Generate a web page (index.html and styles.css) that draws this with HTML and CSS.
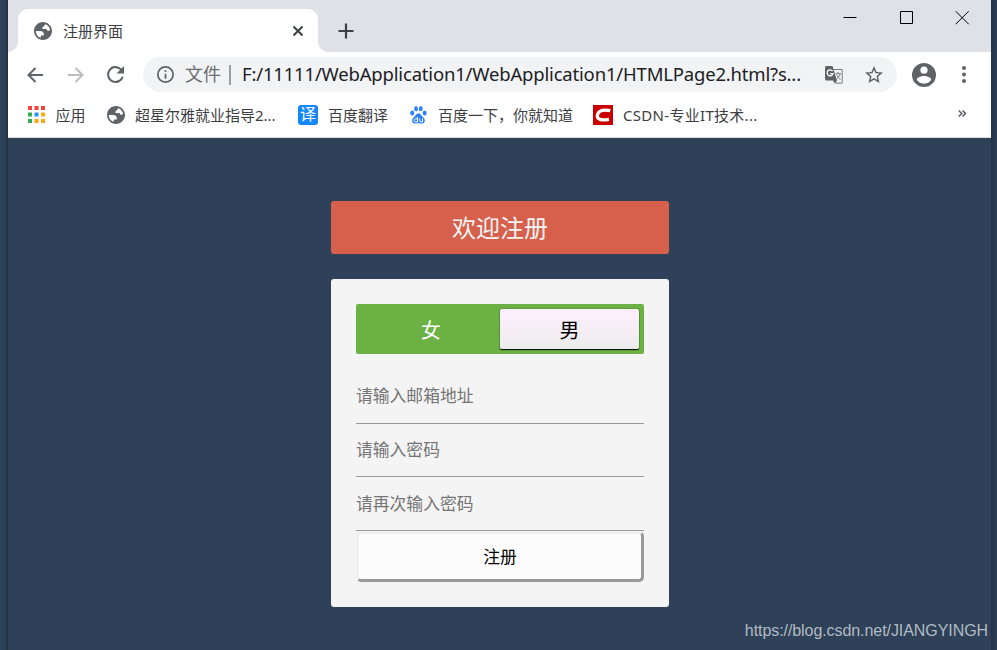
FILE: index.html
```
<!DOCTYPE html>
<html lang="zh-CN">
<head>
<meta charset="utf-8">
<title>注册界面</title>
<link rel="stylesheet" href="styles.css">
</head>
<body>
<svg class="defs" aria-hidden="true">
  <symbol id="globe" viewBox="2 2 20 20">
    <path d="M12 2C6.480 2 2 6.480 2 12s4.480 10 10 10 10-4.480 10-10S17.520 2 12 2zM4 12h4.400c3.410.020 4.920 1.730 4.540 5.130H9.490v2.470A8 8 0 0 1 4 12zm8-8a7.980 7.980 0 0 1 7.890 6.720c-.440.640-1 .960-1.670.960-1.390 0-2.190-.810-2.180-2.030H11.420c-.230-1.960.500-2.910 2.100-2.840 0-1.100.500-1.800 1.200-2.230A8 8 0 0 0 12 4z"/>
  </symbol>
</svg>
<div class="window">
  <header class="strip">
    <div class="tab">
      <svg class="globe"><use href="#globe"/></svg>
      <span class="tab-title">注册界面</span>
      <svg class="close" viewBox="0 0 12 12"><path d="M1.500 1.500l9 9m0-9l-9 9"/></svg>
    </div>
    <svg class="plus" viewBox="0 0 16 16"><path d="M8 .500v15M.500 8h15"/></svg>
    <div class="controls">
      <svg viewBox="0 0 14 14"><path d="M.500 7.500h13"/></svg>
      <svg viewBox="0 0 14 14"><path d="M1.500 1.500h12v12h-12z"/></svg>
      <svg viewBox="0 0 14 14"><path d="M.700 1.200l13 13m0-13l-13 13"/></svg>
    </div>
  </header>
  <nav class="toolbar">
    <svg class="back" viewBox="0 0 16 16"><path d="M16 8H1.500M8.500 1L1.500 8l7 7"/></svg>
    <svg class="forward" viewBox="0 0 16 16"><path d="M0 8h14.500M7.500 1l7 7-7 7"/></svg>
    <svg class="reload" viewBox="4 4 16 16"><path d="M17.650 6.350A8 8 0 1 0 19.730 14h-2.080A6 6 0 1 1 12 6c1.660 0 3.140.690 4.220 1.780L13 11h7V4z"/></svg>
    <div class="omnibox">
      <svg class="info" viewBox="2 2 20 20"><path d="M11 17h2v-6h-2zm1-15a10 10 0 1 0 0 20 10 10 0 0 0 0-20zm0 18a8 8 0 1 1 0-16 8 8 0 0 1 0 16zM11 9h2V7h-2z"/></svg>
      <span class="scheme">文件</span>
      <i class="divider"></i>
      <span class="url">F:/11111/WebApplication1/WebApplication1/HTMLPage2.html?s...</span>
      <svg class="translate" viewBox="0 0 18 18">
        <path class="sheet" d="M8.500 3.500h8.700v13.700h-6.500"/>
        <path class="fill" d="M1.500 0h6l4.500 14.500H1.500A1.500 1.500 0 0 1 0 13V1.500A1.500 1.500 0 0 1 1.500 0zM8 14.500h4L10 17.800z"/>
        <path class="letter" d="M7.600 5.100A3 3 0 1 0 8 7.700H5.200"/>
        <path class="sheet" d="M10.500 7.700H16M13 6v1.500M15 8c-.500 2.500-2 4-3.500 5M12 9c.800 2 2 3.500 3.500 4.500"/>
      </svg>
      <svg class="star" viewBox="2 2 20 19"><path d="M22 9.240l-7.190-.620L12 2 9.190 8.630 2 9.240l5.460 4.730L5.820 21 12 17.270 18.180 21l-1.630-7.030zM12 15.400l-3.760 2.270 1-4.280-3.320-2.880 4.380-.380L12 6.100l1.710 4.040 4.380.380-3.320 2.880 1 4.280z"/></svg>
    </div>
    <svg class="avatar" viewBox="2 2 20 20"><path d="M12 2a10 10 0 1 0 0 20 10 10 0 0 0 0-20zm0 3a3 3 0 1 1 0 6 3 3 0 0 1 0-6zm0 14.200a7.200 7.200 0 0 1-6-3.220c.030-1.990 4-3.080 6-3.080s5.970 1.090 6 3.080a7.200 7.200 0 0 1-6 3.220z"/></svg>
    <svg class="more" viewBox="0 0 4 17"><circle cx="2" cy="2" r="2"/><circle cx="2" cy="8.500" r="2"/><circle cx="2" cy="15" r="2"/></svg>
  </nav>
  <nav class="bookmarks">
    <svg class="apps" viewBox="0 0 17 17">
      <path class="red" d="M0 0h4v4H0zM6.500 0h4v4h-4zM13 0h4v4h-4z"/>
      <path class="green" d="M0 6.500h4v4H0zM0 13h4v4H0z"/>
      <path class="blue" d="M6.500 6.500h4v4h-4z"/>
      <path class="gold" d="M13 6.500h4v4h-4zM6.500 13h4v4h-4zM13 13h4v4h-4z"/>
    </svg>
    <span class="bm-apps">应用</span>
    <svg class="globe"><use href="#globe"/></svg>
    <span class="bm-star">超星尔雅就业指导2...</span>
    <span class="fanyi">译</span>
    <span class="bm-fanyi">百度翻译</span>
    <svg class="paw" viewBox="0 0 17 18">
      <ellipse cx="2.200" cy="7" rx="2" ry="2.500"/><ellipse cx="6" cy="2.700" rx="1.900" ry="2.600"/><ellipse cx="10.800" cy="2.700" rx="1.900" ry="2.600"/><ellipse cx="14.700" cy="7" rx="2" ry="2.500"/>
      <path d="M8.500 7.200c2.200 0 2.700 2.300 4.400 3.800 3.300 2.800 2 6.500-.900 6.500-1.400 0-2-.300-3.500-.300s-2.100.300-3.500.300c-2.900 0-4.200-3.700-.900-6.500C5.800 9.500 6.300 7.200 8.500 7.200z"/>
      <path class="mark" d="M7.500 11v5H5.800c-2.200 0-2.200-3.200 0-3.200h1.700M9.700 12.500v2.300c0 1.500 2.800 1.500 2.800 0v-2.300V16"/>
    </svg>
    <span class="bm-baidu">百度一下，你就知道</span>
    <svg class="csdn" viewBox="0 0 20 20"><path class="bg" d="M0 0h20v20H0z"/><path class="c" d="M17.300 5.600c-6.500-1.200-11.500-.500-12.800 3.900-1.500 5.200 4.300 6.300 11.500 4.900"/></svg>
    <span class="bm-csdn">CSDN-专业IT技术...</span>
    <svg class="overflow" viewBox="0 0 8 7"><path d="M.700.500l3 3-3 3M4.500.500l3 3-3 3"/></svg>
  </nav>
  <main class="page">
    <h1 class="banner">欢迎注册</h1>
    <form class="card">
      <div class="switch"><span class="female">女</span><span class="male">男</span></div>
      <input class="field first" type="email" placeholder="请输入邮箱地址">
      <input class="field second" type="password" placeholder="请输入密码">
      <input class="field" type="password" placeholder="请再次输入密码">
      <button class="submit" type="button">注册</button>
    </form>
    <span class="watermark">https://blog.csdn.net/JIANGYINGH</span>
  </main>
</div>
</body>
</html>
```
FILE: styles.css
```
* { box-sizing: border-box; }
body {
  margin: 0;
  height: 650px;
  overflow: hidden;
  background: linear-gradient(90deg, #2e4259 0, #2c4056 5px, #25313f 8px, #25313f 991px, #26384d 993px, #2b3e55 997px);
  font-family: "Noto Sans", "Noto Sans CJK SC", sans-serif;
  color: #3c4043;
}
.defs { position: absolute; width: 0; height: 0; }
svg { display: block; flex: none; overflow: visible; }
span { white-space: nowrap; }
.window { width: 983px; height: 650px; margin-left: 8px; background: #fff; display: flex; flex-direction: column; }
.globe { width: 18px; height: 18px; fill: #5f6368; }

.strip { height: 52px; flex: none; background: #dee1e6; display: flex; align-items: flex-start; padding-left: 10px; }
.tab {
  position: relative;
  width: 300px; height: 43px; margin-top: 9px; padding: 0 14px 0 16px;
  display: flex; align-items: center;
  background: #fff; border-radius: 10px 10px 0 0;
}
.tab::before, .tab::after { content: ""; position: absolute; bottom: 0; width: 10px; height: 10px; }
.tab::before { left: -10px; background: radial-gradient(circle at 0 0, transparent 9.500px, #fff 10px); }
.tab::after { right: -10px; background: radial-gradient(circle at 100% 0, transparent 9.500px, #fff 10px); }
.tab-title { margin-left: 11px; font-size: 15px; line-height: 20px; flex: 1; }
.close { width: 12px; height: 12px; fill: none; stroke: #3c4043; stroke-width: 2; }
.plus { width: 16px; height: 16px; margin: 22.500px 0 0 19.500px; fill: none; stroke: #3c4043; stroke-width: 2.200; }
.controls { display: flex; gap: 42px; margin: 10px 22px 0 auto; }
.controls svg { width: 14px; height: 14px; fill: none; stroke: #000; stroke-width: 1; }

.toolbar { height: 45px; flex: none; display: flex; align-items: center; padding-left: 19px; }
.back, .forward { width: 16px; height: 16px; fill: none; stroke: #5f6368; stroke-width: 2; }
.forward { margin-left: 25px; stroke: #babcbe; }
.reload { width: 17px; height: 17px; margin-left: 23px; fill: #5f6368; }
.omnibox { width: 754px; height: 35px; margin-left: 19px; border-radius: 18px; background: #f1f3f4; display: flex; align-items: center; padding-left: 14px; }
.info { width: 17px; height: 17px; fill: #5f6368; }
.scheme { margin: -2px 0 0 11px; width: 37px; font-size: 18px; line-height: 24px; color: #6a6e72; }
.divider { width: 2px; height: 20px; margin: 1px 0 0 7px; background: #9b9da0; }
.url { margin: -2px 0 0 11px; width: 562px; font-size: 18.500px; line-height: 24px; letter-spacing: -.180px; color: #202124; }
.translate { width: 18px; height: 18px; margin-left: 21px; }
.translate .fill { fill: #5f6368; }
.translate .sheet { fill: none; stroke: #777b7f; stroke-width: 1; }
.translate .letter { fill: none; stroke: #fff; stroke-width: 1.300; }
.star { width: 18px; height: 17px; margin-left: 22px; fill: #5f6368; }
.avatar { width: 24px; height: 24px; margin-left: 15px; fill: #5f6368; }
.more { width: 4px; height: 17px; margin-left: 26px; fill: #5f6368; }

.bookmarks { height: 41px; flex: none; display: flex; align-items: center; padding: 0 25px 4px 19.500px; font-size: 15px; line-height: 20px; border-bottom: 1px solid #dadce0; }
.apps { width: 17px; height: 17px; margin-top: -1px; }
.red { fill: #f44336; }
.green { fill: #34a853; }
.blue { fill: #2196f3; }
.gold { fill: #fbab10; }
.bm-apps { width: 30px; margin: 0 21.500px 0 11px; }
.bm-star { width: 142px; margin: 0 21px 0 10px; }
.fanyi { width: 20px; height: 20px; border-radius: 3px; background: #1687fb; color: #fff; font-size: 16px; line-height: 19px; text-align: center; }
.bm-fanyi { width: 60px; margin: 0 22px 0 10px; }
.paw { width: 17px; height: 18px; fill: #2e82f6; }
.paw .mark { fill: none; stroke: #fff; stroke-width: 1; }
.bm-baidu { width: 135px; margin: 0 20px 0 11px; }
.csdn { width: 20px; height: 20px; }
.csdn .bg { fill: #ca0000; }
.csdn .c { fill: none; stroke: #fff; stroke-width: 3.300; }
.bm-csdn { margin-left: 10px; letter-spacing: .300px; }
.overflow { width: 8px; height: 7px; margin: 0 0 3px auto; fill: none; stroke: #5f6368; stroke-width: 1.600; }

.page { position: relative; flex: 1; background: #2e4158; padding: 63px 0 0 323px; }
.banner { width: 338px; height: 53px; margin: 0 0 25px; border-radius: 3px; background: #d6604b; color: #f4f4f4; text-align: center; font-size: 24px; line-height: 54px; font-weight: 400; }
.card { width: 338px; height: 328px; padding: 25px; border-radius: 3px; background: #f4f4f4; display: flex; flex-direction: column; }
.switch { height: 50px; flex: none; margin-bottom: 16px; padding: 5px 5px 4px 6px; display: flex; border-radius: 2px; background: #6cb144; font-size: 20px; line-height: 43px; text-align: center; }
.female { width: 138px; color: #fff; }
.male { width: 139px; height: 40px; border-radius: 2px; color: #000; background: linear-gradient(#fef0ff, #ececec); box-shadow: 0 1px 1px #000, 0 0 1px #000; }
.field {
  width: 100%; height: 54px; flex: none; margin: 0; padding: 0; border: 0; border-bottom: 1px solid #999;
  background: none; font-family: inherit; font-size: 16.800px; line-height: 24px; outline: 0;
}
.first, .second { padding-bottom: 2px; }
.second { height: 53px; }
.field::placeholder { color: #757575; opacity: 1; }
.submit {
  height: 51px; flex: none; margin: 0; padding: 0; border: 3px solid; border-color: #f0f0f0 #999 #999 #f0f0f0; border-radius: 5px;
  background: #fcfcfc; color: #000; font-family: inherit; font-size: 16.800px; line-height: 24px;
}
.watermark { position: absolute; right: 3px; bottom: 9px; color: #b2bac3; font-family: "Liberation Sans", sans-serif; font-size: 16px; line-height: 20px; letter-spacing: -.070px; }
```
